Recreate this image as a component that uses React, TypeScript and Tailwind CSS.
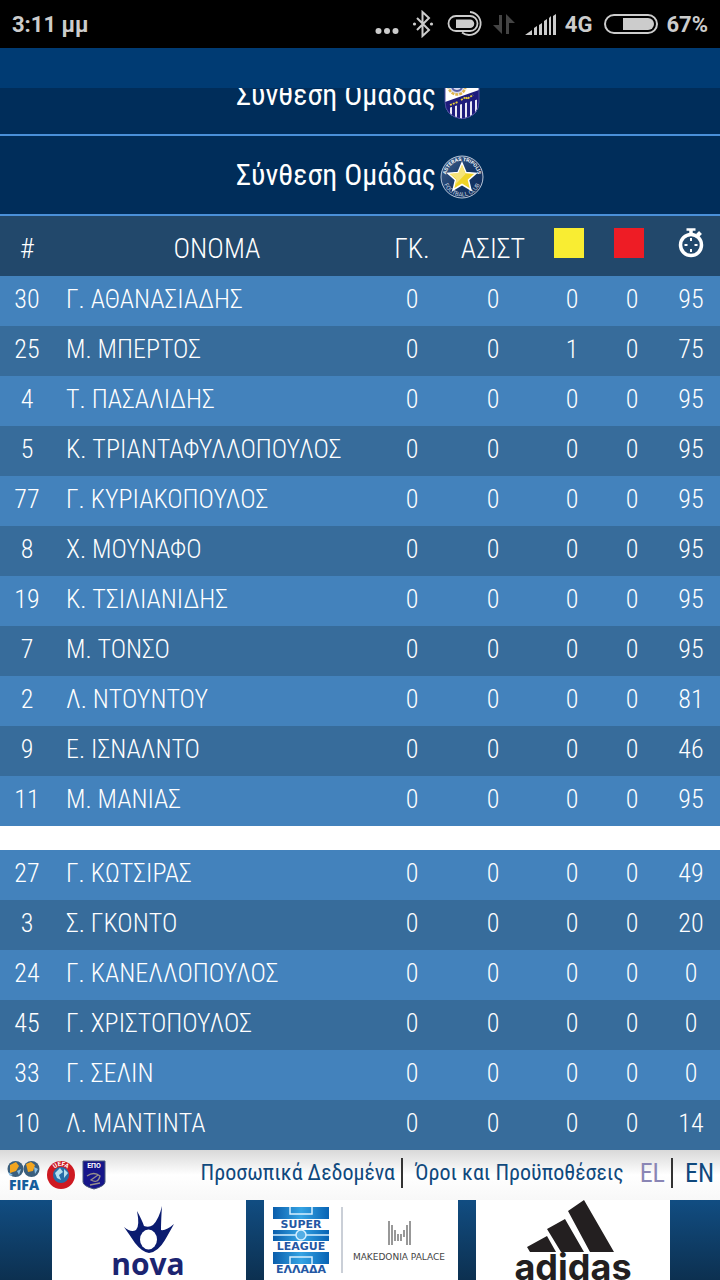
import React from "react";

type Player = {
  number: number;
  initial: string;
  surname: string;
  goals: number;
  assists: number;
  yellow: number;
  red: number;
  minutes: number;
};

const player = (number: number, initial: string, surname: string, minutes: number, yellow = 0): Player => ({
  number,
  initial,
  surname,
  goals: 0,
  assists: 0,
  yellow,
  red: 0,
  minutes,
});

const starters: Player[] = [
  player(30, "Γ.", "ΑΘΑΝΑΣΙΑΔΗΣ", 95),
  player(25, "Μ.", "ΜΠΕΡΤΟΣ", 75, 1),
  player(4, "Τ.", "ΠΑΣΑΛΙΔΗΣ", 95),
  player(5, "Κ.", "ΤΡΙΑΝΤΑΦΥΛΛΟΠΟΥΛΟΣ", 95),
  player(77, "Γ.", "ΚΥΡΙΑΚΟΠΟΥΛΟΣ", 95),
  player(8, "Χ.", "ΜΟΥΝΑΦΟ", 95),
  player(19, "Κ.", "ΤΣΙΛΙΑΝΙΔΗΣ", 95),
  player(7, "Μ.", "ΤΟΝΣΟ", 95),
  player(2, "Λ.", "ΝΤΟΥΝΤΟΥ", 81),
  player(9, "Ε.", "ΙΣΝΑΛΝΤΟ", 46),
  player(11, "Μ.", "ΜΑΝΙΑΣ", 95),
];

const substitutes: Player[] = [
  player(27, "Γ.", "ΚΩΤΣΙΡΑΣ", 49),
  player(3, "Σ.", "ΓΚΟΝΤΟ", 20),
  player(24, "Γ.", "ΚΑΝΕΛΛΟΠΟΥΛΟΣ", 0),
  player(45, "Γ.", "ΧΡΙΣΤΟΠΟΥΛΟΣ", 0),
  player(33, "Γ.", "ΣΕΛΙΝ", 0),
  player(10, "Λ.", "ΜΑΝΤΙΝΤΑ", 14),
];

function StatusBar() {
  return (
    <div className="flex h-12 items-center justify-between bg-black px-3 font-['Roboto',sans-serif] text-[22px] font-bold text-[#cccccc]">
      <span>3:11 μμ</span>
      <div className="flex items-center">
        <svg className="mr-3 h-12 w-6" viewBox="0 0 24 48" fill="#ccc" aria-hidden="true">
          <circle cx="3.5" cy="31" r="3" />
          <circle cx="12" cy="31" r="3" />
          <circle cx="20.5" cy="31" r="3" />
        </svg>
        <svg className="mr-3 h-7 w-6" viewBox="0 0 24 28" fill="none" stroke="#ccc" strokeWidth="2" aria-hidden="true">
          <path d="M6 8l12 12-6.500 6V2l6.500 6L6 20" />
          <circle cx="3.5" cy="14" r="1.6" fill="#ccc" stroke="none" />
          <circle cx="20.5" cy="14" r="1.6" fill="#ccc" stroke="none" />
        </svg>
        <svg className="mr-2 h-7 w-[38px]" viewBox="0 0 38 28" fill="none" stroke="#ccc" strokeWidth="1.8" aria-hidden="true">
          <rect x="1.500" y="6" width="29" height="15" rx="7.500" />
          <path d="M9 9.500h14a4 4 0 0 1 0 8.500H9z" fill="#ccc" stroke="none" />
          <path d="M23 2a11.500 11.500 0 1 1-8 20.500" />
        </svg>
        <svg className="mr-2.5 h-6 w-[22px]" viewBox="0 0 22 24" fill="#444" aria-hidden="true">
          <path d="M6 3h3v19L0 13h6zM13 22V2l9 9h-6v11z" />
        </svg>
        <svg className="mr-2 h-6 w-8" viewBox="0 0 32 24" fill="#ccc" aria-hidden="true">
          <path d="M0 23l7-5v5zM9 23v-7l3-2v9zM14 23v-10l3-2v12zM19 23V9l3-2v16zM24 23V6l2-2v19zM28 23V4l3-2v21z" />
        </svg>
        <span className="mr-3">4G</span>
        <svg className="mr-2 h-5 w-[54px]" viewBox="0 0 54 20" fill="none" aria-hidden="true">
          <rect x="1" y="1" width="52" height="18" rx="9" stroke="#ccc" strokeWidth="2" />
          <path d="M19 4h25a6 6 0 0 1 0 12H19z" fill="#ccc" />
        </svg>
        <span>67%</span>
      </div>
    </div>
  );
}

function LamiaCrest() {
  return (
    <svg className="h-11 w-11" viewBox="0 0 44 44" aria-hidden="true">
      <clipPath id="shield">
        <path d="M5 2h34v25q0 14-17 17Q5 41 5 27z" />
      </clipPath>
      <g clipPath="url(#shield)">
        <path d="M0 0h44v44H0z" fill="#fff" />
        <path d="M5 30L39 17v27H5z" fill="#1e1c7c" />
        <path d="M11 31v14M16 29v17M21 28v19M26 27v17M31 26v20M36 24v15" stroke="#fff" strokeWidth="1.8" />
        <path d="M5 27L39 15v9L5 34z" fill="#1e1c7c" />
        <circle cx="17" cy="11" r="8.500" fill="#d9dcef" stroke="#dfb64d" strokeWidth="2.5" strokeDasharray="3 1" />
        <circle cx="17" cy="11" r="5" fill="none" stroke="#5960a8" strokeWidth="2" />
        <path d="M10 30l8-3M21 25l5-3 1 2 6-4" stroke="#e8cf36" strokeWidth="1.8" fill="none" strokeDasharray="2 1" />
      </g>
      <path d="M5 2h34v25q0 14-17 17Q5 41 5 27z" fill="none" stroke="#4b4aa0" />
    </svg>
  );
}

function AsterasCrest() {
  return (
    <svg className="h-11 w-11" viewBox="0 0 44 44" aria-hidden="true">
      <defs>
        <linearGradient id="disc" x1="0" y1="0" x2="1" y2="1">
          <stop offset="0" stopColor="#476790" />
          <stop offset="0.5" stopColor="#17396a" />
          <stop offset="1" stopColor="#0d2a57" />
        </linearGradient>
        <path id="topArc" d="M6 22a16 16 0 0 1 32 0" />
        <path id="bottomArc" d="M2.500 22a19.500 19.500 0 0 0 39 0" />
      </defs>
      <circle cx="22" cy="22" r="21" fill="url(#disc)" stroke="#b8c6d8" />
      <text className="fill-white font-['Roboto',sans-serif] text-[5px] font-bold">
        <textPath href="#topArc" startOffset="50%" textAnchor="middle">ASTERAS TRIPOLIS</textPath>
      </text>
      <text className="fill-[#c4d0df] font-['Roboto',sans-serif] text-[6px]">
        <textPath href="#bottomArc" startOffset="50%" textAnchor="middle">FOOTBALL CLUB</textPath>
      </text>
      <path
        d="M22 8l4 9.500 10 .8-7.500 6.700 2.400 10L22 29.500 13.100 35l2.400-10L8 18.300l10-.8z"
        fill="#f0d428"
        stroke="#fff"
        strokeWidth="1.5"
      />
      <path d="M22 10l3.500 9L15 30l1.500-6-6-5 8-1z" fill="#f6e47a" />
    </svg>
  );
}

function TeamBand({ crest }: { crest: React.ReactNode }) {
  return (
    <button
      type="button"
      className="flex h-20 w-full shrink-0 items-center justify-center gap-1 border-b-2 border-[#4a90d9] bg-[#002d5a] pt-1 font-['Ubuntu_Condensed','Roboto_Condensed',sans-serif] text-[30px] leading-10 text-white"
    >
      <span className="pb-1">Σύνθεση Ομάδας</span>
      {crest}
    </button>
  );
}

function Stopwatch() {
  return (
    <svg className="mx-auto h-8 w-7" viewBox="0 0 28 32" fill="none" stroke="#fff" role="img" aria-label="Λεπτά">
      <circle cx="14" cy="18" r="10.500" strokeWidth="3.500" />
      <path d="M9.500 2.500h9" strokeWidth="2.500" />
      <path d="M14 3v4" strokeWidth="3.500" />
      <path d="M20.500 8.500l3-3" strokeWidth="4" />
      <path d="M14 11v3M14 22v3M7.500 18h3M17.500 18h3" strokeWidth="2" />
    </svg>
  );
}

function PlayerRow({ p }: { p: Player }) {
  return (
    <tr className="h-[50px] odd:bg-[#4382bc] even:bg-[#376c9b]">
      <td className="pb-1">{p.number}</td>
      <td className="pb-1 pl-3 text-left">
        <span className="[font-kerning:none]">{p.initial}</span> {p.surname}
      </td>
      <td className="pb-1">{p.goals}</td>
      <td className="pb-1">{p.assists}</td>
      <td className="pb-1">{p.yellow}</td>
      <td className="pb-1">{p.red}</td>
      <td className="pb-1">{p.minutes}</td>
    </tr>
  );
}

function LineupTable() {
  return (
    <table className="w-full table-fixed border-collapse text-center font-['Roboto_Condensed','Liberation_Sans_Narrow',sans-serif] text-[26px] leading-8 font-light text-white">
      <colgroup>
        <col className="w-[54px]" />
        <col />
        <col className="w-16" />
        <col className="w-[98px]" />
        <col className="w-[60px]" />
        <col className="w-[60px]" />
        <col className="w-[58px]" />
      </colgroup>
      <thead>
        <tr className="h-[60px] bg-[#22486b] text-[28px]">
          <th className="pt-1.5 font-light">#</th>
          <th className="pt-1.5 font-light">ΟΝΟΜΑ</th>
          <th className="pt-1.5 font-light">ΓΚ.</th>
          <th className="pt-1.5 font-light">ΑΣΙΣΤ</th>
          <th className="pr-1.5 pb-1.5">
            <div className="mx-auto size-[30px] bg-[#f9ed32]" role="img" aria-label="Κίτρινες κάρτες" />
          </th>
          <th className="pr-1.5 pb-1.5">
            <div className="mx-auto size-[30px] bg-[#ee1c25]" role="img" aria-label="Κόκκινες κάρτες" />
          </th>
          <th className="pb-1.5">
            <Stopwatch />
          </th>
        </tr>
      </thead>
      <tbody>
        {starters.map((p) => (
          <PlayerRow key={p.number} p={p} />
        ))}
      </tbody>
      <tbody aria-hidden="true">
        <tr className="h-6 bg-white">
          <td colSpan={7} />
        </tr>
      </tbody>
      <tbody>
        {substitutes.map((p) => (
          <PlayerRow key={p.number} p={p} />
        ))}
      </tbody>
    </table>
  );
}

function FooterLogos() {
  return (
    <div className="flex items-center gap-1.5">
      <svg className="h-8 w-[34px] overflow-visible" viewBox="0 0 34 32" role="img" aria-label="FIFA">
        <circle cx="9.500" cy="10" r="8" fill="#3b5f7d" />
        <circle cx="25.500" cy="10" r="8" fill="#3b5f7d" />
        <path d="M4 6l6-3 3 4-3 5-6 2zM20 5l5-2 4 3-2 6-5 1z" fill="#f2a51f" />
        <path d="M11 12l4-2-2 6zM28 8l4 2-3 5zM2 13l5 3-3 1z" fill="#8ac0e6" />
        <text x="18" y="31" textAnchor="middle" className="fill-[#165d9c] font-['Open_Sans',sans-serif] text-[14px] font-extrabold">FIFA</text>
      </svg>
      <svg className="size-[30px]" viewBox="0 0 30 30" role="img" aria-label="UEFA">
        <defs>
          <path id="uefaArc" d="M6 15a9 9 0 0 1 18 0" />
        </defs>
        <circle cx="15" cy="15" r="14" fill="#ce1a22" />
        <circle cx="15" cy="15" r="8" fill="#286ea8" />
        <path d="M9 13l5-5 3 4-4 3 2 5-4-2zM18 9l4 4-4 5z" fill="#b8e0ee" />
        <text className="fill-white font-['Roboto',sans-serif] text-[6px] font-bold">
          <textPath href="#uefaArc" startOffset="50%" textAnchor="middle">UEFA</textPath>
        </text>
      </svg>
      <svg className="h-[30px] w-6" viewBox="0 0 24 30" role="img" aria-label="ΕΠΟ">
        <path d="M1 1h22v21q0 4-11 7Q1 26 1 22z" fill="#16168a" stroke="#49597a" />
        <text x="12" y="8" textAnchor="middle" className="fill-white font-['Roboto',sans-serif] text-[7px] font-bold">ΕΠΟ</text>
        <path d="M5 16q7-5 13 0-2 8-9 4l7-5M8 25l10-2" fill="none" stroke="#96918b" strokeWidth="1.3" />
      </svg>
    </div>
  );
}

function Footer() {
  return (
    <footer className="flex h-[50px] items-center justify-between bg-linear-to-b from-[#d9d9d9] via-white via-50% to-[#f8f8f8] px-1.5 font-['Ubuntu_Condensed','Roboto_Condensed',sans-serif] text-[22px] text-[#10497d]">
      <FooterLogos />
      <nav className="flex items-center pb-1 leading-[30px] whitespace-nowrap">
        <a href="#privacy" className="border-r-2 border-[#333] pr-1.5">Προσωπικά Δεδομένα</a>
        <a href="#terms" className="mr-4 pl-3">Όροι και Προϋποθέσεις</a>
        <a href="#el" className="border-r-2 border-[#333] pr-1.5 text-[26px] text-[#8a86b5]">EL</a>
        <a href="#en" className="pl-3 text-[26px]">EN</a>
      </nav>
    </footer>
  );
}

function Sponsors() {
  return (
    <div className="flex h-20 justify-center gap-[18px] overflow-hidden bg-linear-to-b from-[#114d82] to-[#0c3050] pl-0.5">
      <a href="#nova" className="w-[194px] bg-white">
        <svg className="h-20 w-full overflow-visible" viewBox="0 0 194 80" role="img" aria-label="nova">
          <path
            d="M72 27Q79 33 84 30Q88 26 85 11Q90 20 92 26Q97 28 101 25Q107 19 110 6Q109 20 109 30Q114 31 122 24Q117 33 113 40Q106 52 97 53Q90 52 83 43Q77 34 72 27z"
            fill="#0b1c70"
          />
          <ellipse cx="96.500" cy="39.500" rx="8.500" ry="10" fill="#fff" />
          <text x="96" y="75" textAnchor="middle" className="fill-[#1b2471] font-['Open_Sans',sans-serif] text-[30px] font-bold">nova</text>
        </svg>
      </a>
      <a href="#superleague" className="w-[194px] bg-white">
        <svg className="h-20 w-full" viewBox="0 0 194 80" role="img" aria-label="Super League Ελλάδα, Makedonia Palace">
          <defs>
            <linearGradient id="pitch">
              <stop offset="0" stopColor="#0a5dab" />
              <stop offset="0.5" stopColor="#35a4e4" />
              <stop offset="1" stopColor="#0863b4" />
            </linearGradient>
          </defs>
          <path d="M9 7h56v12H9zM9 30h56v11H9zM9 52h56v12H9z" fill="url(#pitch)" />
          <path d="M26 7v7h22V7M9 35h56M26 64v-7h22v7" fill="none" stroke="#d6efff" strokeWidth="1.500" />
          <circle cx="37" cy="35" r="5" fill="#54aee5" stroke="#d6efff" strokeWidth="1.500" />
          <g className="font-['DejaVu_Sans',sans-serif] text-[11px] font-bold" fill="#2457a4" textAnchor="middle">
            <text x="37" y="28">SUPER</text>
            <text x="37" y="50">LEAGUE</text>
            <text x="37" y="73">ΕΛΛΑΔΑ</text>
          </g>
          <path d="M78 7v66" stroke="#b9bfca" strokeWidth="1.500" />
          <path
            d="M125 21v24M128 25v20M131 30v11M134 34v7M137 34v7M140 30v7M143 25v20M146 21v24"
            stroke="#777"
            strokeWidth="1.500"
          />
          <text x="135" y="60" textAnchor="middle" className="fill-[#444] font-['DejaVu_Sans',sans-serif] text-[9px]">MAKEDONIA PALACE</text>
        </svg>
      </a>
      <a href="#adidas" className="w-[194px] bg-white">
        <svg className="h-20 w-full" viewBox="0 0 194 80" role="img" aria-label="adidas">
          <g fill="#231f20">
            <path d="M92 11l16-11 30 52h-24zM71 29l18-10 19 33H85zM51 47l20-11 9 16H54z" />
            <text x="97" y="80" textAnchor="middle" className="font-['Inter',sans-serif] text-[36px] font-bold">adidas</text>
          </g>
        </svg>
      </a>
    </div>
  );
}

export default function App() {
  return (
    <main className="flex w-full flex-col">
      <StatusBar />
      <div className="h-10 bg-[#003b73]" />
      <div className="flex h-12 flex-col justify-end overflow-hidden">
        <TeamBand crest={<LamiaCrest />} />
      </div>
      <TeamBand crest={<AsterasCrest />} />
      <LineupTable />
      <Footer />
      <Sponsors />
    </main>
  );
}
